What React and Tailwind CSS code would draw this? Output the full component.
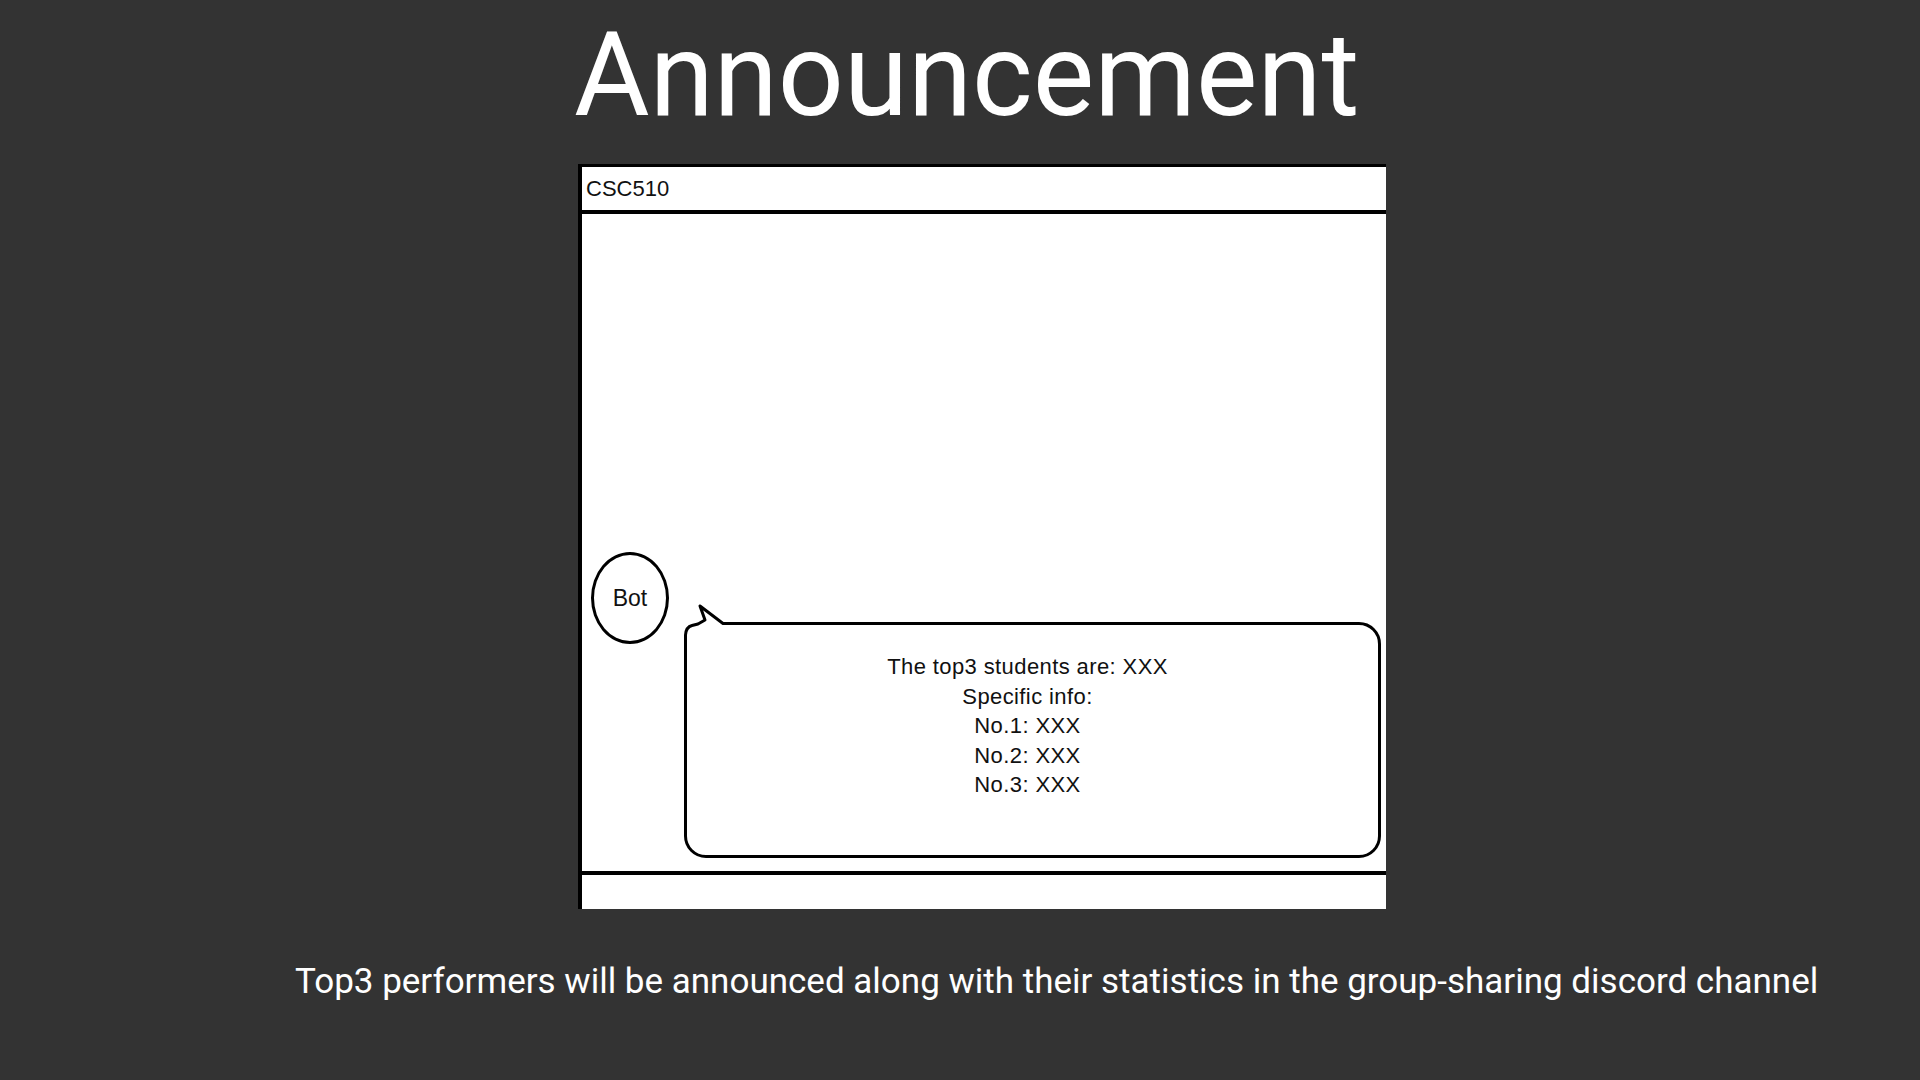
export default function App() {
  const lines = [
    "The top3 students are: XXX",
    "Specific info:",
    "No.1: XXX",
    "No.2: XXX",
    "No.3: XXX"
  ];

  return (
    <div className="w-[1920px] h-[1080px] bg-[#333333] flex flex-col items-start overflow-hidden font-['Roboto',sans-serif]">

      <h1 className="mt-[18px] ml-[574px] text-white text-[116px] leading-[115px] font-normal">
        Announcement
      </h1>

      {/* wireframe mockup */}
      <div className="mt-[31px] ml-[578px] w-[808px] h-[745px] bg-white border-l-4 border-t-[3px] border-black flex flex-col font-['Liberation_Sans',Arial,sans-serif] text-[#111]">

        <div className="h-[43px] pl-[4px] flex items-center text-[22px] leading-[42px]">
          CSC510
        </div>
        <div className="h-[4px] bg-black" />

        <div className="h-[657px] flex items-start pl-[9px] pr-[5px]">

          <div className="mt-[338px] w-[78px] h-[92px] rounded-[50%] border-[3px] border-black flex items-center justify-center text-[23px] shrink-0">
            Bot
          </div>

          <div className="relative mt-[408px] ml-[15px] flex-1 h-[236px] border-[3px] border-black rounded-[22px] pt-[27px] pr-[10px] flex flex-col items-center text-[22px] leading-[29.5px] tracking-[0.4px]">
            <svg
              className="absolute -left-[3px] -top-[23px]"
              width="52"
              height="46"
              viewBox="0 0 52 46"
            >
              <path
                d="M1.5 45 L1.5 33 Q2 25 8 23.5 L14 22 L21 18 L16 4 L39 21.5 L50 21.5 L50 46 L1.5 46 Z"
                fill="white"
              />
              <path
                d="M1.5 46 L1.5 33 Q2 25 8 23.5 L14 22 L21 18 L16 4 L39 21.5 L52 21.5"
                fill="none"
                stroke="black"
                strokeWidth="3"
                strokeLinejoin="round"
              />
            </svg>
            {lines.map(l => (
              <div key={l}>{l}</div>
            ))}
          </div>

        </div>

        <div className="h-[4px] bg-black" />
        <div className="flex-1" />
      </div>

      <p className="mt-[55px] ml-[295px] text-white text-[35px] leading-[35px]">
        Top3 performers will be announced along with their statistics in the group-sharing discord channel
      </p>

    </div>
  );
}
